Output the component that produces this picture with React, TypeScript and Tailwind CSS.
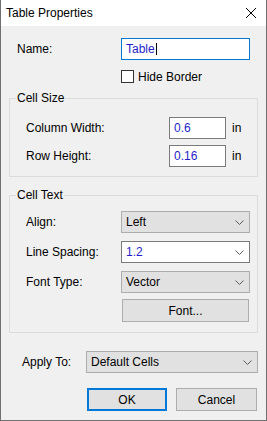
import React from "react";

const font = { fontFamily: '"Liberation Sans", Arial, sans-serif' };

// small combobox chevron
const Chevron = () => (
  <svg width="9" height="5" viewBox="0 0 9 5" className="shrink-0">
    <path d="M0.5 0.5 L4.5 4.5 L8.5 0.5" fill="none" stroke="#5a5a5a" strokeWidth="1" />
  </svg>
);

const Select = ({ value, width, editable }: { value: string; width: string; editable?: boolean }) => (
  <div
    className={`${width} h-[22px] flex items-center justify-between pl-[4px] pr-[5px] border ${
      editable ? "bg-white border-[#7a7a7a] text-[#1e1ec8]" : "bg-[#e1e1e1] border-[#adadad] text-black"
    }`}
  >
    <span>{value}</span>
    <Chevron />
  </div>
);

const NumInput = ({ value }: { value: string }) => (
  <div className="w-[57px] h-[22px] bg-white border border-[#7a7a7a] flex items-center pl-[4px] text-[#1e1ec8]">
    {value}
  </div>
);

export default function App() {
  return (
    <div
      className="w-[267px] h-[421px] flex flex-col border-x border-b border-[#707070] text-[12px] leading-[16px] text-black select-none"
      style={font}
    >
      {/* Title bar */}
      <div className="h-[26px] shrink-0 bg-white flex items-center justify-between pl-[5px] pr-[10px]">
        <span className="text-[12px]">Table Properties</span>
        <svg width="10" height="10" viewBox="0 0 10 10">
          <path d="M0 0 L10 10 M10 0 L0 10" stroke="#000" strokeWidth="1" />
        </svg>
      </div>

      {/* Body */}
      <div className="flex-1 bg-[#f0f0f0] flex flex-col pt-[12px]">
        {/* Name */}
        <div className="flex items-center pl-[16px]">
          <span className="w-[104px]">Name:</span>
          <div className="w-[129px] h-[22px] bg-white border border-[#0078d7] flex items-center pl-[4px] text-[#1e1ec8]">
            Table
            <span className="inline-block w-[1px] h-[12px] bg-black ml-[1px]" />
          </div>
        </div>

        {/* Hide border */}
        <div className="flex items-center h-[13px] mt-[10px] pl-[120px] gap-[4px]">
          <div className="w-[13px] h-[13px] bg-white border border-[#333]" />
          <span>Hide Border</span>
        </div>

        {/* Cell Size */}
        <fieldset className="ml-[8px] mt-[7px] w-[249px] border border-[#dcdcdc] pt-[11px] pb-[9px]">
          <legend className="ml-[6px] px-[1px] leading-[16px]">Cell Size</legend>
          <div className="flex flex-col gap-[6px] pl-[16px]">
            <div className="flex items-center">
              <span className="w-[143px]">Column Width:</span>
              <NumInput value="0.6" />
              <span className="ml-[6px]">in</span>
            </div>
            <div className="flex items-center">
              <span className="w-[143px]">Row Height:</span>
              <NumInput value="0.16" />
              <span className="ml-[6px]">in</span>
            </div>
          </div>
        </fieldset>

        {/* Cell Text */}
        <fieldset className="ml-[8px] mt-[10px] w-[249px] border border-[#dcdcdc] pt-[8px] pb-[10px]">
          <legend className="ml-[6px] px-[1px] leading-[16px]">Cell Text</legend>
          <div className="flex flex-col gap-[8px] pl-[16px]">
            <div className="flex items-center">
              <span className="w-[95px]">Align:</span>
              <Select value="Left" width="w-[129px]" />
            </div>
            <div className="flex items-center">
              <span className="w-[95px]">Line Spacing:</span>
              <Select value="1.2" width="w-[129px]" editable />
            </div>
            <div className="flex items-center">
              <span className="w-[95px]">Font Type:</span>
              <Select value="Vector" width="w-[129px]" />
            </div>
          </div>
          <button className="ml-[112px] mt-[6px] w-[127px] h-[23px] bg-[#e1e1e1] border border-[#adadad] flex items-center justify-center">
            Font...
          </button>
        </fieldset>

        {/* Apply To */}
        <div className="flex items-center mt-[18px] pl-[21px]">
          <span className="w-[64px]">Apply To:</span>
          <Select value="Default Cells" width="w-[172px]" />
        </div>

        {/* Buttons */}
        <div className="flex mt-[15px] pl-[86px] gap-[9px]">
          <button className="w-[80px] h-[23px] bg-[#e1e1e1] border-2 border-[#0078d7] flex items-center justify-center">
            OK
          </button>
          <button className="w-[81px] h-[23px] bg-[#e1e1e1] border border-[#adadad] flex items-center justify-center">
            Cancel
          </button>
        </div>
      </div>
    </div>
  );
}
